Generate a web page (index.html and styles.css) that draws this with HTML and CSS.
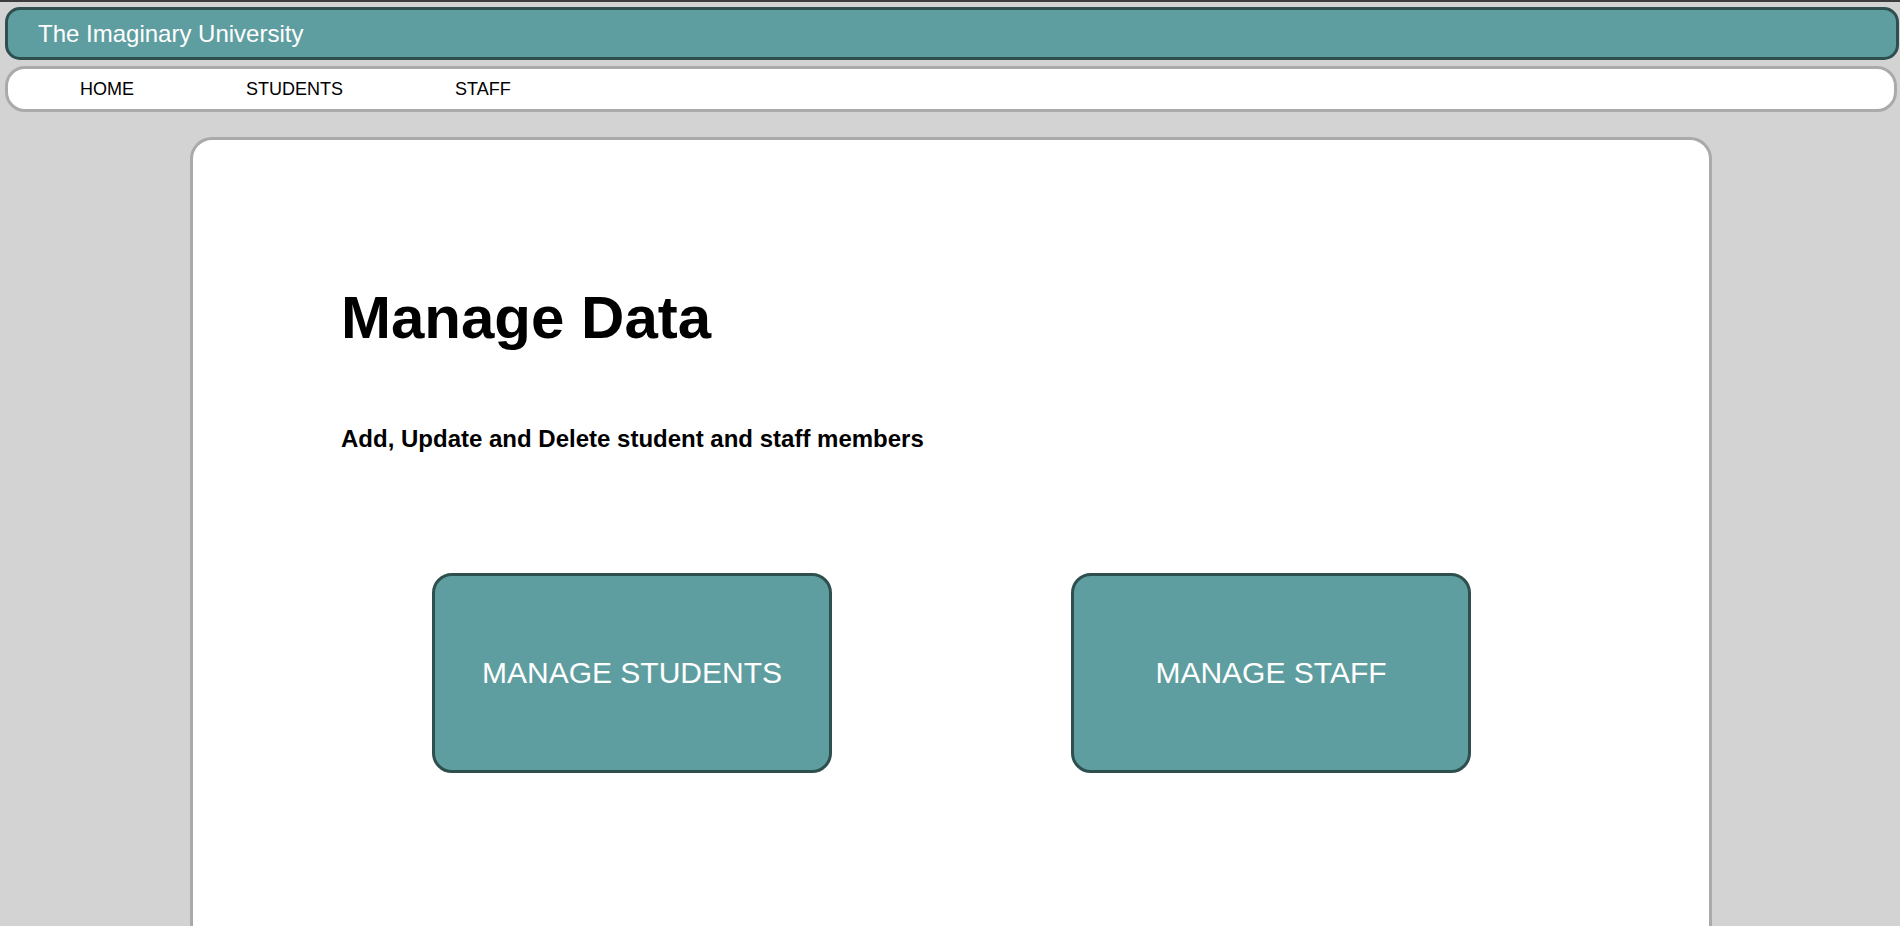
FILE: index.html
```html
<!DOCTYPE html>
<html lang="en">
<head>
<meta charset="utf-8">
<title>The Imaginary University</title>
<link rel="stylesheet" href="styles.css">
</head>
<body>
<header class="site-header">The Imaginary University</header>
<nav class="site-nav">
  <a class="nav-link" href="#">HOME</a>
  <a class="nav-link" href="#">STUDENTS</a>
  <a class="nav-link" href="#">STAFF</a>
</nav>
<main class="card">
  <h1 class="title">Manage Data</h1>
  <h2 class="subtitle">Add, Update and Delete student and staff members</h2>
  <div class="actions">
    <a class="action-btn" href="#">MANAGE STUDENTS</a>
    <a class="action-btn" href="#">MANAGE STAFF</a>
  </div>
</main>
</body>
</html>
```
FILE: styles.css
```css
* {
  box-sizing: border-box;
}

html, body {
  margin: 0;
  padding: 0;
}

body {
  background: #d3d3d3;
  border-top: 2px solid #3c3c3c;
  font-family: "Liberation Sans", Arial, sans-serif;
  color: #000;
  overflow: hidden;
  height: 926px;
}

.site-header {
  margin: 5px 1px 0 5px;
  height: 53px;
  border: 3px solid #2f4f4f;
  border-radius: 15px;
  background: #5f9ea0;
  color: #fff;
  font-size: 24px;
  line-height: 47px;
  padding-left: 30px;
}

.site-nav {
  margin: 6px 3px 0 5px;
  height: 46px;
  border: 3px solid #aaaaaa;
  border-radius: 20px;
  background: #fff;
  display: flex;
  align-items: center;
  gap: 112px;
  padding-left: 72px;
}

.nav-link {
  color: #000;
  text-decoration: none;
  font-size: 18px;
  line-height: 40px;
}

.card {
  margin: 25px 0 0 190px;
  width: 1522px;
  min-height: 900px;
  background: #fff;
  border: 3px solid #aaaaaa;
  border-radius: 22px;
  padding: 148px 0 0 148px;
}

.title {
  margin: 0;
  font-size: 60px;
  line-height: 60px;
  font-weight: bold;
}

.subtitle {
  margin: 79px 0 0 0;
  font-size: 24px;
  line-height: 24px;
  font-weight: bold;
}

.actions {
  margin: 122px 0 0 -147px;
  display: flex;
  justify-content: center;
  gap: 239px;
}

.action-btn {
  width: 400px;
  height: 200px;
  border: 3px solid #2f4f4f;
  border-radius: 20px;
  background: #5f9ea0;
  color: #fff;
  text-decoration: none;
  font-size: 30px;
  display: flex;
  align-items: center;
  justify-content: center;
}
```
